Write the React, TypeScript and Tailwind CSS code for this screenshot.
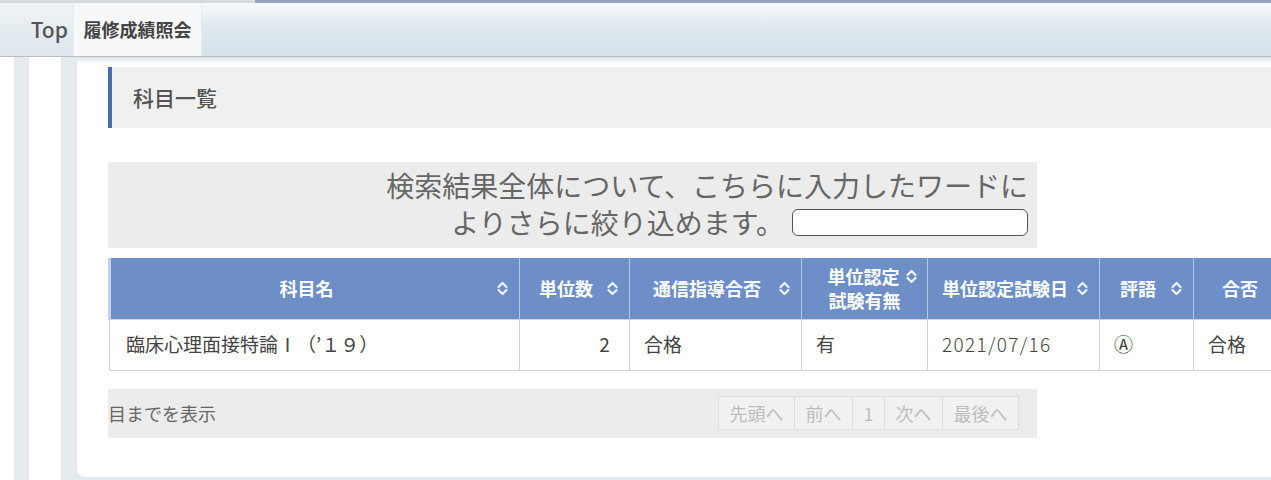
const font = { fontFamily: '"Noto Sans CJK JP", "Noto Sans", sans-serif' }

function SortIcon() {
  return (
    <svg width="13" height="17" viewBox="0 0 13 17" className="shrink-0">
      <path d="M2.5 7 L6.5 3 L10.5 7" fill="none" stroke="#eef2f9" strokeWidth="2.2" strokeLinecap="round" strokeLinejoin="round" />
      <path d="M2.5 10 L6.5 14 L10.5 10" fill="none" stroke="#eef2f9" strokeWidth="2.2" strokeLinecap="round" strokeLinejoin="round" />
    </svg>
  )
}

const columns = [
  { label: "科目名", width: "w-[410px]" },
  { label: "単位数", width: "w-[110px]" },
  { label: "通信指導合否", width: "w-[172px]" },
  { label: "単位認定試験有無", width: "w-[126px]", twoLine: true },
  { label: "単位認定試験日", width: "w-[172px]" },
  { label: "評語", width: "w-[94px]" },
  { label: "合否", width: "w-[110px]" },
]

const row = ["臨床心理面接特論Ⅰ（’１９）", "2", "合格", "有", "2021/07/16", "Ⓐ", "合格"]

const pages = ["先頭へ", "前へ", "1", "次へ", "最後へ"]

export default function App() {
  return (
    <div className="w-[1271px] h-[480px] overflow-hidden bg-white flex flex-col" style={font}>
      {/* top nav */}
      <div className="flex h-[3px] shrink-0">
        <div className="w-[255px] bg-[#d7dbe0]"></div>
        <div className="flex-1 bg-[#9aa3b9]"></div>
      </div>
      <div className="relative flex h-[54px] shrink-0 border-b border-[#b9bfc5] bg-gradient-to-b from-[#f7fafc] via-[#dde7ee] to-[#d6e2ea]">
        <div className="flex w-[74px] items-center justify-end pr-[5px] border-r border-[#e9eff3] bg-gradient-to-b from-[#eef3f6] to-[#dce6ec]">
          <span className="text-[21px] font-medium text-[#555]">Top</span>
        </div>
        <div className="flex w-[128px] items-center justify-center bg-[#f6f8fa] border-r border-[#e4eaee]">
          <span className="text-[18px] font-bold text-[#444]">履修成績照会</span>
        </div>
      </div>

      <div className="flex flex-1 min-h-0">
        <div className="w-[14px] bg-white"></div>
        <div className="w-[15px] bg-[#e5ecf0]"></div>
        <div className="w-[32px] bg-white"></div>
        <div className="flex-1 min-w-0 bg-[#e5ecf0] pl-[16px] pb-[3px]">
          <div className="h-full rounded-bl-[8px] bg-white overflow-hidden">
            <div className="h-[6px] bg-gradient-to-b from-[#dcdfe2] to-white"></div>
            <div className="pl-[31px] pt-[4px]">
              {/* heading */}
              <div className="flex h-[61px] items-center border-l-4 border-[#4b6ca6] bg-[#f0f0f0] pl-[21px]">
                <h2 className="text-[21px] font-medium text-[#555]">科目一覧</h2>
              </div>

              {/* search */}
              <div className="mt-[34px] w-[929px] h-[86px] bg-[#ececec] pr-[9px] pt-[5px] text-right text-[28px] leading-[37px] text-[#666]">
                <div>検索結果全体について、こちらに入力したワードに</div>
                <div className="flex items-center justify-end gap-[8px]">
                  <span>よりさらに絞り込めます。</span>
                  <input className="w-[236px] h-[27px] rounded-[6px] border-[1.5px] border-[#555] bg-white" />
                </div>
              </div>

              {/* table */}
              <table className="mt-[10px] border-collapse w-[1194px] table-fixed">
                <thead>
                  <tr className="h-[61px] bg-[#6d8ec6] text-white">
                    {columns.map((c, i) => (
                      <th
                        key={c.label}
                        className={`${c.width} border-x border-[#b6c7e3] ${c.twoLine ? "px-[6px]" : "px-[10px]"} text-[18px] font-bold ${i === 0 ? "border-l-[3px] border-l-[#c4d2ec]" : ""}`}
                      >
                        {c.twoLine ? (
                          <div className="flex flex-col items-center leading-[24px]">
                            <div className="flex items-center gap-[5px] pl-[16px]">
                              <span>単位認定</span>
                              <SortIcon />
                            </div>
                            <span>試験有無</span>
                          </div>
                        ) : (
                          <div className="flex items-center gap-[4px]">
                            <span className="flex-1 text-center">{c.label}</span>
                            <SortIcon />
                          </div>
                        )}
                      </th>
                    ))}
                  </tr>
                </thead>
                <tbody>
                  <tr className="h-[51px] bg-white text-[19px] text-[#444]">
                    {row.map((v, i) => (
                      <td
                        key={i}
                        className={`border border-[#d2d2d2] px-[14px] ${i === 1 ? "text-right pr-[18px] tracking-[0.06em]" : "text-left"} ${i === 0 ? "pl-[16px]" : ""} ${i === 4 ? "tracking-[0.07em] font-light" : ""}`}
                      >
                        {v}
                      </td>
                    ))}
                  </tr>
                </tbody>
              </table>

              {/* footer */}
              <div className="mt-[18px] flex h-[49px] w-[929px] items-center justify-between bg-[#ececec] pr-[18px]">
                <span className="text-[18px] text-[#666]">目までを表示</span>
                <div className="flex h-[34px]">
                  {pages.map((p) => (
                    <div
                      key={p}
                      className="flex items-center border border-[#dedede] bg-[#f1f1f1] px-[10.5px] text-[18px] text-[#bdbdbd] -ml-px"
                    >
                      {p}
                    </div>
                  ))}
                </div>
              </div>
            </div>
          </div>
        </div>
      </div>
    </div>
  )
}
